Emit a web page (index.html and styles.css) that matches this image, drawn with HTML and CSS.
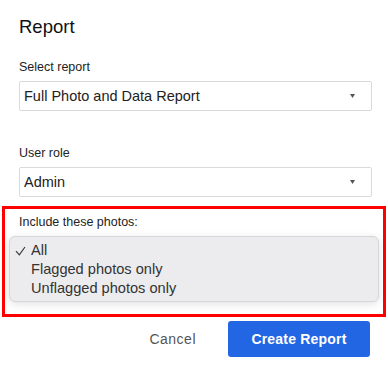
FILE: index.html
```html
<!DOCTYPE html>
<html lang="en">
<head>
    <meta charset="UTF-8">
    <meta name="viewport" content="width=device-width, initial-scale=1.0">
    <title>Report</title>
    <link rel="stylesheet" href="styles.css">
</head>
<body>
    <div class="dialog">
        <h2>Report</h2>
        <div class="field">
            <label>Select report</label>
            <div class="select">
                <span>Full Photo and Data Report</span>
                <svg class="caret" width="5" height="4" viewBox="0 0 5 4"><path d="M0 0H5L2.5 4Z" fill="#555"/></svg>
            </div>
        </div>
        <div class="field">
            <label>User role</label>
            <div class="select">
                <span>Admin</span>
                <svg class="caret" width="5" height="4" viewBox="0 0 5 4"><path d="M0 0H5L2.5 4Z" fill="#555"/></svg>
            </div>
        </div>
        <div class="highlight">
            <label>Include these photos:</label>
            <ul class="menu">
                <li class="checked">
                    <svg class="check" width="11" height="10" viewBox="0 0 11 10"><path d="M1 5.2L4.3 8.8L10 1" fill="none" stroke="#333" stroke-width="1.1"/></svg>
                    All
                </li>
                <li>Flagged photos only</li>
                <li>Unflagged photos only</li>
            </ul>
        </div>
        <div class="actions">
            <button type="button" class="cancel">Cancel</button>
            <button type="button" class="primary">Create Report</button>
        </div>
    </div>
</body>
</html>
```

FILE: styles.css
```css
* { margin: 0; padding: 0; box-sizing: border-box; }
body {
    font-family: "Liberation Sans", Arial, sans-serif;
    background-color: #ffffff;
    color: #222;
}
.dialog {
    padding: 16px 0 0 0;
}
h2 {
    font-size: 18.5px;
    line-height: 22px;
    font-weight: 400;
    color: #111;
    margin: 0 19px 21px;
}
label {
    display: block;
    font-size: 12.5px;
    line-height: 16px;
    color: #222;
}
.field {
    margin: 0 16px 0 19px;
}
.field + .field { margin-top: 34px; }
.field label { margin-bottom: 6px; }
.select {
    height: 30px;
    border: 1px solid #dadada;
    border-radius: 2px;
    background-color: #fff;
    display: flex;
    align-items: center;
    justify-content: space-between;
    padding: 0 16px 0 4px;
    font-size: 14.5px;
    color: #222;
}
.caret { display: block; }
.highlight {
    margin: 9px 2px 0;
    border: 3px solid #ff0000;
    padding: 5px 4px 12px;
}
.highlight label { padding-left: 10px; margin-bottom: 6px; }
.menu {
    list-style: none;
    background-color: #ececee;
    border: 1px solid #d6d6d8;
    border-radius: 6px;
    box-shadow: 0 2px 8px rgba(0, 0, 0, 0.12);
    padding: 4px 0 3px;
    font-size: 14.6px;
    line-height: 19px;
    color: #333;
}
.menu li {
    position: relative;
    padding-left: 21px;
}
.check {
    position: absolute;
    left: 5px;
    top: 5px;
}
.actions {
    display: flex;
    justify-content: flex-end;
    align-items: center;
    gap: 16px;
    margin: 4px 18px 0 0;
}
button {
    font-family: "Liberation Sans", Arial, sans-serif;
    font-size: 14px;
    border: none;
    cursor: pointer;
}
.cancel {
    background: none;
    color: #555;
    letter-spacing: 0.5px;
    padding: 0 16px;
    height: 36px;
}
.primary {
    background-color: #2266e3;
    color: #fff;
    font-weight: 700;
    letter-spacing: 0.2px;
    border-radius: 3px;
    height: 36px;
    width: 142px;
}
```
